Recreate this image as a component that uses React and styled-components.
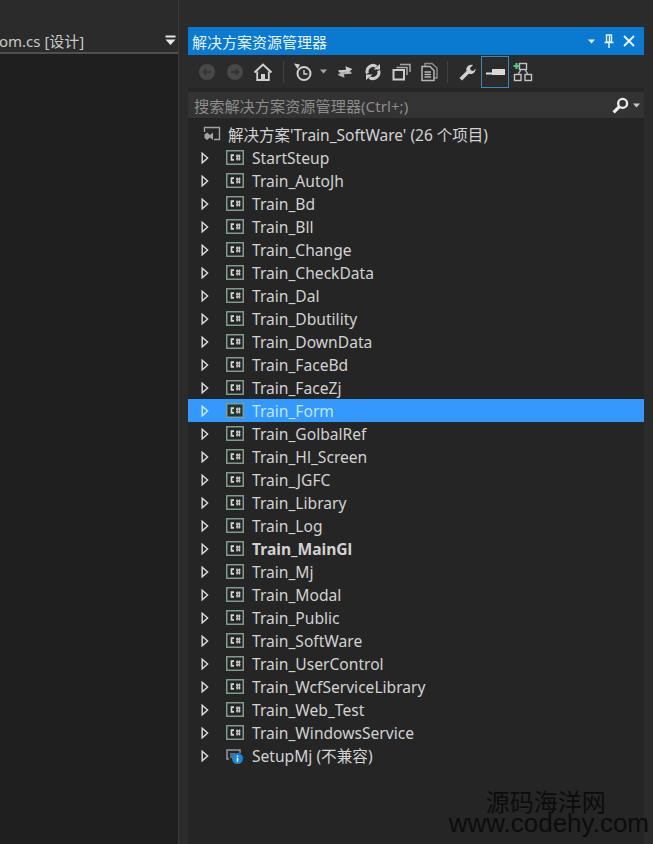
import React from 'react';
import styled, { createGlobalStyle } from 'styled-components';

const GlobalStyle = createGlobalStyle`
  html, body {
    margin: 0;
    padding: 0;
    background: #2b2b2b;
  }
  body {
    font-family: "Noto Sans", "Noto Sans CJK SC", sans-serif;
    overflow: hidden;
  }
`

const Page = styled.div`
  position: relative;
  display: flex;
  width: 653px;
  height: 844px;
  overflow: hidden;
  background: #2b2b2b;
`

const DesignerColumn = styled.div`
  display: flex;
  flex-direction: column;
  width: 178px;
  padding-top: 28px;
  box-sizing: border-box;
`

const DocTab = styled.div`
  display: flex;
  align-items: center;
  justify-content: space-between;
  height: 24px;
  padding-right: 2px;
  border-bottom: 2px solid #505050;
  overflow: hidden;
`

const DocTitle = styled.div`
  margin-left: -1px;
  font-size: 15px;
  color: #c8c8c8;
  white-space: nowrap;
`

const DesignerBody = styled.div`
  flex: 1;
  background: #1f1f1f;
`

const Splitter = styled.div`
  width: 10px;
  background: linear-gradient(90deg, #3a3a3a 0, #3a3a3a 1px, #2b2b2b 1px);
`

const ExplorerPanel = styled.div`
  display: flex;
  flex-direction: column;
  width: 456px;
  height: 100%;
  background: #252525;
`

const TopGap = styled.div`
  height: 27px;
  background: #2b2b2b;
`

const TitleBar = styled.div`
  display: flex;
  align-items: center;
  justify-content: space-between;
  height: 28px;
  padding: 0 9px 0 4px;
  background: #0a7ad1;
  color: #e6f3fb;
  font-size: 15px;
`

const TitleIcons = styled.div`
  display: flex;
  align-items: center;
  gap: 9px;
`

const Toolbar = styled.div`
  display: flex;
  align-items: center;
  height: 33px;
  padding-left: 5px;
  background: #2b2b2b;
`

const ToolButton = styled.div`
  display: flex;
  align-items: center;
  justify-content: center;
  width: 28px;
  height: 32px;
  box-sizing: border-box;
  border: 1px solid ${({ $active }) => ($active ? '#3f86b8' : 'transparent')};
`

const ToolSep = styled.div`
  width: 1px;
  height: 22px;
  margin: 0 5px 0 ${({ $left }) => $left || 4}px;
  background: #414141;
`

const CaretSlot = styled.div`
  display: flex;
  margin: 0 4px 0 3px;
`

const SearchBar = styled.div`
  display: flex;
  align-items: center;
  justify-content: space-between;
  height: 26px;
  margin-top: 4px;
  padding: 0 4px 0 6px;
  background: #333333;
  color: #8c8c8c;
  font-size: 15.2px;
`

const SearchIcons = styled.div`
  display: flex;
  align-items: center;
  gap: 4px;
`

const Tree = styled.div`
  display: flex;
  flex-direction: column;
  padding-top: 5px;
`

const SolutionRow = styled.div`
  display: flex;
  align-items: center;
  height: 23px;
  padding-left: 15px;
  gap: 7px;
  font-size: 15.5px;
  color: #d2d2d2;
  white-space: nowrap;
`

const ProjectRow = styled.div`
  display: flex;
  align-items: center;
  height: 23px;
  padding-left: 13px;
  font-size: 15.6px;
  font-weight: ${({ $bold }) => ($bold ? 700 : 400)};
  color: ${({ $selected }) => ($selected ? '#bfe6ff' : '#d2d2d2')};
  background: ${({ $selected }) => ($selected ? '#3399ff' : 'transparent')};
  white-space: nowrap;
`

const Arrow = styled.svg`
  width: 8px;
  height: 12px;
  margin-right: 17px;
`

const ProjectIconWrap = styled.div`
  display: flex;
  width: 18px;
  margin-right: 8px;
`

const Watermark = styled.div`
  position: absolute;
  right: 4px;
  bottom: 10px;
  display: flex;
  flex-direction: column;
  align-items: center;
  color: #0c0c0c;
  font-family: "Liberation Sans", "Noto Sans CJK SC", sans-serif;
  line-height: 21px;
`

const WatermarkCn = styled.div`
  margin-right: 6px;
  font-size: 24px;
`

const WatermarkUrl = styled.div`
  font-size: 26px;
`

const projects = [
  'StartSteup', 'Train_AutoJh', 'Train_Bd', 'Train_Bll', 'Train_Change', 'Train_CheckData',
  'Train_Dal', 'Train_Dbutility', 'Train_DownData', 'Train_FaceBd', 'Train_FaceZj', 'Train_Form',
  'Train_GolbalRef', 'Train_Hl_Screen', 'Train_JGFC', 'Train_Library', 'Train_Log', 'Train_MainGl',
  'Train_Mj', 'Train_Modal', 'Train_Public', 'Train_SoftWare', 'Train_UserControl',
  'Train_WcfServiceLibrary', 'Train_Web_Test', 'Train_WindowsService',
]

const CsIcon = ({ selected }) => (
  <svg width="18" height="15" viewBox="0 0 18 15">
    <rect x="0.75" y="0.75" width="16.5" height="13.5" fill={selected ? '#23392f' : '#252525'} stroke="#7f9c8c" strokeWidth="1.5" />
    <path d="M8 5.2H5.5V9.8H8" fill="none" stroke="#d8d8d8" strokeWidth="1.7" />
    <path d="M10 6h4.5M10 8.8h4.5M11.2 4.5v6M13.4 4.5v6" stroke="#c8c8c8" strokeWidth="1.3" />
  </svg>
)

const SetupIcon = () => (
  <svg width="18" height="18" viewBox="0 0 18 18">
    <path d="M3 12H1V3h13v3" fill="none" stroke="#8e9aa2" strokeWidth="1.5" />
    <rect x="4" y="6" width="5" height="5" fill="#5d6a72" />
    <circle cx="11.5" cy="11.5" r="5.5" fill="#1c86d6" />
    <path d="M11.5 8.5v1.2M11.5 10.8v4" stroke="#f0f8ff" strokeWidth="1.6" />
  </svg>
)

const SolutionIcon = () => (
  <svg width="18" height="17" viewBox="0 0 18 17">
    <path d="M1.5 6V1.5H16.5V13.5H11" fill="none" stroke="#a2a2a2" strokeWidth="1.4" />
    <path d="M1.5 8.5L4 6.5L7 9L10 6.5V14L7 11.5L4 14L1.5 12Z" fill="#a2a2a2" />
  </svg>
)

const ExpandArrow = ({ selected }) => (
  <Arrow viewBox="0 0 8 12">
    <path d="M1.2 1.2L6.6 6L1.2 10.8Z" fill="none" stroke={selected ? '#cbe8ff' : '#d8d8d8'} strokeWidth="1.5" />
  </Arrow>
)

const Circle = ({ dir }) => (
  <svg width="18" height="18" viewBox="0 0 18 18">
    <circle cx="9" cy="9" r="8" fill="#484848" />
    <path d={dir === 'left' ? 'M13 9H6M8.5 6L5.5 9L8.5 12' : 'M5 9H12M9.5 6L12.5 9L9.5 12'} fill="none" stroke="#363636" strokeWidth="1.8" />
  </svg>
)

const Home = () => (
  <svg width="20" height="20" viewBox="0 0 20 20">
    <path d="M1.5 10.5L10 2.5L18.5 10.5" fill="none" stroke="#d0d0d0" strokeWidth="2" />
    <path d="M4.2 9.5V18H15.8V9.5" fill="none" stroke="#d0d0d0" strokeWidth="1.8" />
    <rect x="8" y="12" width="4" height="6" fill="#d0d0d0" />
  </svg>
)

const History = () => (
  <svg width="20" height="20" viewBox="0 0 20 20">
    <circle cx="11" cy="11.5" r="6.5" fill="none" stroke="#d0d0d0" strokeWidth="2" />
    <path d="M11 8V12H14.5" fill="none" stroke="#d0d0d0" strokeWidth="1.4" />
    <path d="M1 1.5L7 2.5L4.5 7Z" fill="#d0d0d0" />
  </svg>
)

const Caret = ({ color = '#a8a8a8' }) => (
  <svg width="7" height="5" viewBox="0 0 7 5">
    <path d="M0 0.5H7L3.5 4.5Z" fill={color} />
  </svg>
)

const Sync = () => (
  <svg width="18" height="18" viewBox="0 0 17 17">
    <path d="M2 6.8L9.5 6.4L9 3L15.5 5.6L10.5 9.6L10 8.2L3 9Z" fill="#cccccc" />
    <path d="M15 10.2L7.5 10.6L8 14L1.5 11.4L6.5 7.4L7 8.8L14 8Z" fill="#cccccc" opacity="0.85" />
  </svg>
)

const Refresh = () => (
  <svg width="18" height="18" viewBox="0 0 18 18">
    <path d="M3.4 10.5A6 6 0 0 1 12.5 3.6M14.6 7.5A6 6 0 0 1 5.5 14.4" fill="none" stroke="#cccccc" strokeWidth="3" />
    <path d="M9.5 6.5H16V1ZM8.5 11.5H2V17Z" fill="#cccccc" />
  </svg>
)

const CollapseAll = () => (
  <svg width="19" height="18" viewBox="0 0 19 18">
    <rect x="1.5" y="7" width="10.5" height="9.5" fill="none" stroke="#cccccc" strokeWidth="2" />
    <path d="M4.5 4.5H15V12M8 1.5H18V9" fill="none" stroke="#a8a8a8" strokeWidth="1.5" />
  </svg>
)

const ShowFiles = () => (
  <svg width="19" height="20" viewBox="0 0 19 20">
    <path d="M5 4V1.5H12L17 6V16H14" fill="none" stroke="#8d8d8d" strokeWidth="1.4" />
    <path d="M2 4.5H10L14 8.5V18.5H2Z" fill="none" stroke="#b5b5b5" strokeWidth="1.5" />
    <path d="M4.5 10H11M4.5 12.5H11M4.5 15H11" stroke="#b5b5b5" strokeWidth="1.3" />
  </svg>
)

const Wrench = () => (
  <svg width="18" height="18" viewBox="0 0 18 18">
    <path d="M1.5 15L8.5 8C7.5 4.5 10.5 1 15 2L12 5L13 7.5L15.5 8L17.5 5.5C18 9.5 14 12 10.8 10.8L4 17.5Z" fill="#d0d0d0" />
  </svg>
)

const PinActive = () => (
  <svg width="19" height="10" viewBox="0 0 19 10">
    <path d="M0 6.5H6" stroke="#e0e0e0" strokeWidth="2" />
    <rect x="6" y="2" width="13" height="6" fill="#d8d8d8" />
  </svg>
)

const ClassDiagram = () => (
  <svg width="20" height="20" viewBox="0 0 20 20">
    <rect x="6.5" y="1.5" width="7" height="6" fill="none" stroke="#c4c4c4" strokeWidth="1.4" />
    <rect x="1.5" y="12.5" width="6.5" height="6" fill="none" stroke="#c4c4c4" strokeWidth="1.4" />
    <rect x="12" y="12.5" width="6.5" height="6" fill="none" stroke="#c4c4c4" strokeWidth="1.4" />
    <path d="M8 7.5L5 12.5M12 7.5L15 12.5" stroke="#c4c4c4" strokeWidth="1.3" />
    <path d="M3.5 1V7M0.5 4H6.5" stroke="#57c97e" strokeWidth="2.2" />
  </svg>
)

const DockPin = () => (
  <svg width="10" height="14" viewBox="0 0 10 14">
    <path d="M2.5 1H7.5V8H2.5ZM5.5 2V7" fill="none" stroke="#e8f4fc" strokeWidth="1.4" />
    <path d="M0.5 8.5H9.5M5 9V14" stroke="#e8f4fc" strokeWidth="1.5" />
  </svg>
)

const CloseX = () => (
  <svg width="12" height="12" viewBox="0 0 12 12">
    <path d="M1 1L11 11M11 1L1 11" stroke="#e8f4fc" strokeWidth="1.9" />
  </svg>
)

const Magnifier = () => (
  <svg width="17" height="17" viewBox="0 0 16 16">
    <circle cx="10" cy="6" r="4.2" fill="none" stroke="#ededed" strokeWidth="2.2" />
    <path d="M7 9L1.5 14.5" stroke="#ededed" strokeWidth="3" />
  </svg>
)

const DocMenu = () => (
  <svg width="11" height="11" viewBox="0 0 11 11">
    <path d="M0.5 0.5H10.5V2.5H0.5Z" fill="#e6e6e6" />
    <path d="M0.5 4.5H10.5L5.5 10Z" fill="#e6e6e6" />
  </svg>
)

const App = () => (
  <Page>
    <GlobalStyle />
    <DesignerColumn>
      <DocTab>
        <DocTitle>om.cs [设计]</DocTitle>
        <DocMenu />
      </DocTab>
      <DesignerBody />
    </DesignerColumn>
    <Splitter />
    <ExplorerPanel>
      <TopGap />
      <TitleBar>
        <span>解决方案资源管理器</span>
        <TitleIcons>
          <Caret color="#e8f4fc" />
          <DockPin />
          <CloseX />
        </TitleIcons>
      </TitleBar>
      <Toolbar>
        <ToolButton><Circle dir="left" /></ToolButton>
        <ToolButton><Circle dir="right" /></ToolButton>
        <ToolButton><Home /></ToolButton>
        <ToolSep $left={6} />
        <ToolButton><History /></ToolButton>
        <CaretSlot><Caret /></CaretSlot>
        <ToolButton><Sync /></ToolButton>
        <ToolButton><Refresh /></ToolButton>
        <ToolButton><CollapseAll /></ToolButton>
        <ToolButton><ShowFiles /></ToolButton>
        <ToolSep />
        <ToolButton><Wrench /></ToolButton>
        <ToolButton $active><PinActive /></ToolButton>
        <ToolButton><ClassDiagram /></ToolButton>
      </Toolbar>
      <SearchBar>
        <span>搜索解决方案资源管理器(Ctrl+;)</span>
        <SearchIcons>
          <Magnifier />
          <Caret color="#c8c8c8" />
        </SearchIcons>
      </SearchBar>
      <Tree>
        <SolutionRow>
          <SolutionIcon />
          <span>解决方案'Train_SoftWare' (26 个项目)</span>
        </SolutionRow>
        {projects.map((name) => (
          <ProjectRow key={name} $selected={name === 'Train_Form'} $bold={name === 'Train_MainGl'}>
            <ExpandArrow selected={name === 'Train_Form'} />
            <ProjectIconWrap><CsIcon selected={name === 'Train_Form'} /></ProjectIconWrap>
            <span>{name}</span>
          </ProjectRow>
        ))}
        <ProjectRow>
          <ExpandArrow />
          <ProjectIconWrap><SetupIcon /></ProjectIconWrap>
          <span>SetupMj (不兼容)</span>
        </ProjectRow>
      </Tree>
    </ExplorerPanel>
    <Watermark>
      <WatermarkCn>源码海洋网</WatermarkCn>
      <WatermarkUrl>www.codehy.com</WatermarkUrl>
    </Watermark>
  </Page>
)

export default App
